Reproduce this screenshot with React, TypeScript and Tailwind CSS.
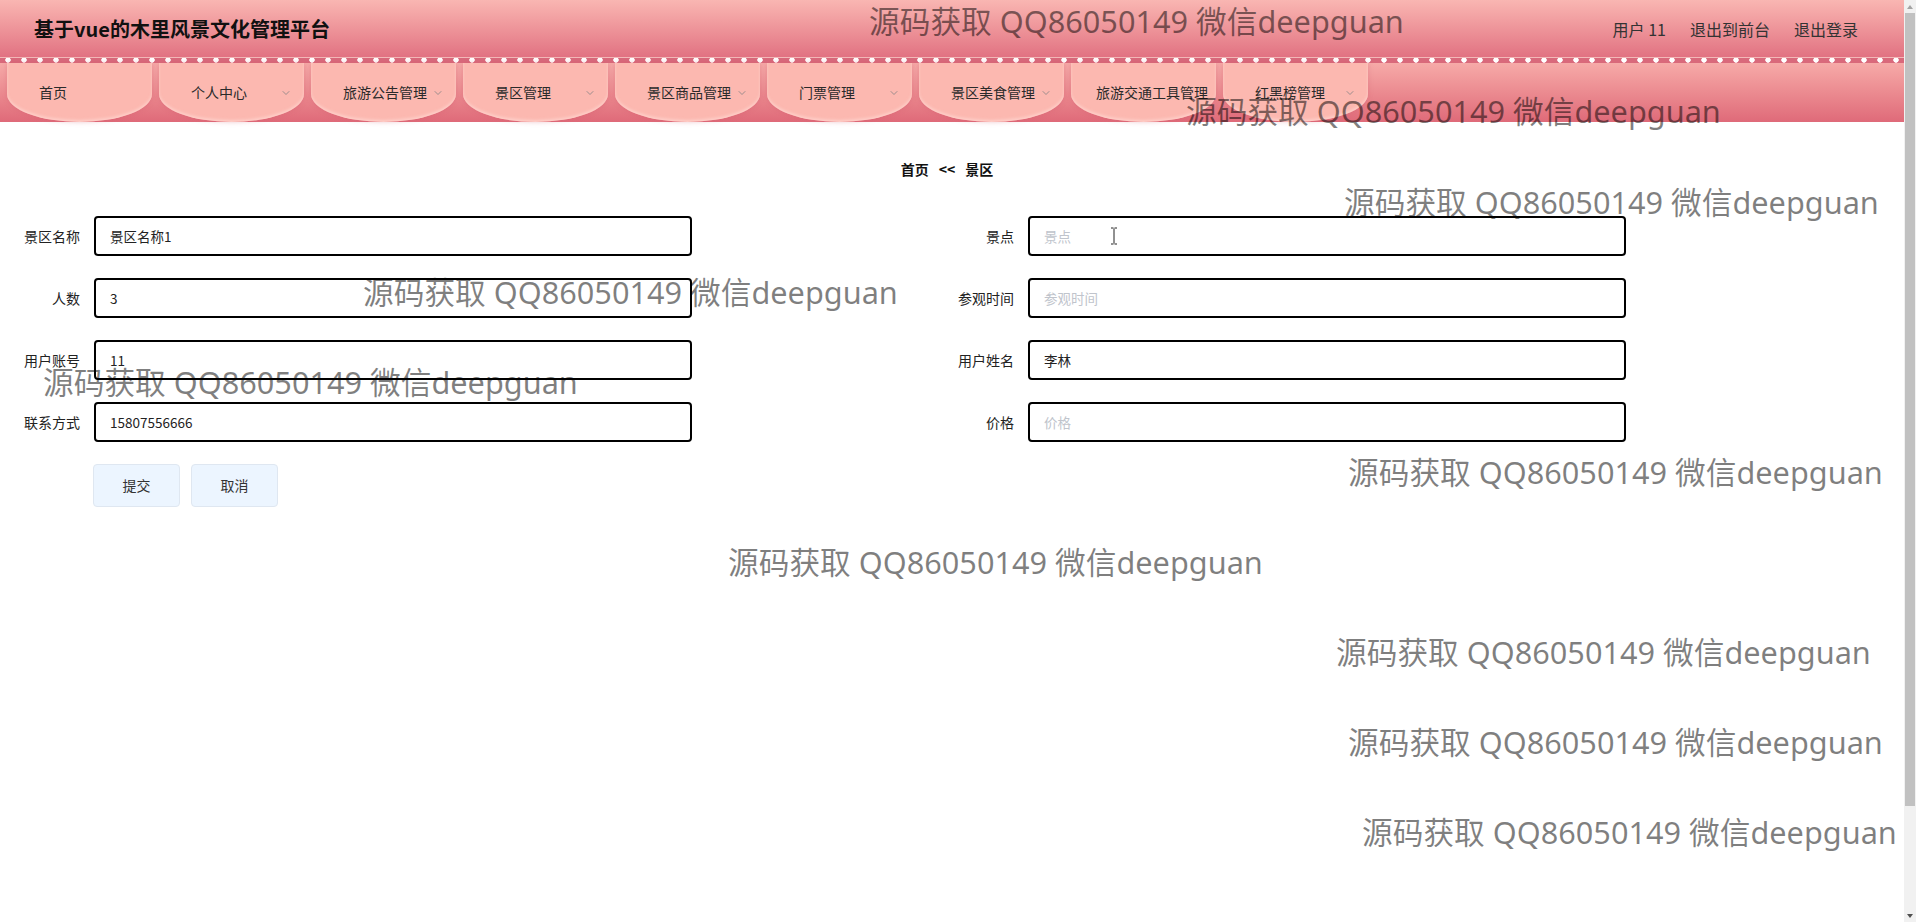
import { ChevronDown } from 'lucide-react';

const tabs = [
  { name: '首页', arrow: false },
  { name: '个人中心', arrow: true },
  { name: '旅游公告管理', arrow: true },
  { name: '景区管理', arrow: true },
  { name: '景区商品管理', arrow: true },
  { name: '门票管理', arrow: true },
  { name: '景区美食管理', arrow: true },
  { name: '旅游交通工具管理', arrow: false },
  { name: '红黑榜管理', arrow: true },
];

const fields = [
  { label: '景区名称', value: '景区名称1', placeholder: '景区名称' },
  { label: '景点', value: '', placeholder: '景点' },
  { label: '人数', value: '3', placeholder: '人数' },
  { label: '参观时间', value: '', placeholder: '参观时间' },
  { label: '用户账号', value: '11', placeholder: '用户账号' },
  { label: '用户姓名', value: '李林', placeholder: '用户姓名' },
  { label: '联系方式', value: '15807556666', placeholder: '联系方式' },
  { label: '价格', value: '', placeholder: '价格' },
];

// watermark overlay positions (left, top)
const marks = [
  [869, 1],
  [1186, 91],
  [1344, 182],
  [363, 272],
  [43, 362],
  [1348, 452],
  [728, 542],
  [1336, 632],
  [1348, 722],
  [1362, 812],
];

export default function App() {
  return (
    <div className="flex bg-white font-['Noto_Sans_CJK_SC',sans-serif] text-[#333]">
      <div className="relative flex-1 min-w-0 min-h-[1043px]">
        <header>
          {/* Top bar */}
          <div className="h-[57px] flex items-center justify-between pl-[34px] pr-[46px] bg-gradient-to-b from-[#f9b6b2] to-[#e17282]">
            <h1 className="text-[20px] font-bold text-[#111]">基于vue的木里风景文化管理平台</h1>
            <div className="flex items-center gap-[24px] text-[16px] text-[#333]">
              <span>用户 11</span>
              <span>退出到前台</span>
              <span>退出登录</span>
            </div>
          </div>

          {/* Dotted border */}
          <div className="h-[6px] bg-[#d9697b] border-t border-[#f3b8b8] bg-[radial-gradient(circle_at_8px_2px,#ffffff_2.4px,transparent_3px)] bg-[length:16px_6px]" />

          {/* Nav */}
          <nav className="h-[59px] flex gap-[7px] pl-[7px] bg-gradient-to-b from-[#f6aaa8] to-[#df6a79]">
            {tabs.map((t, i) => (
              <div
                key={t.name}
                className={`relative w-[145px] h-full flex items-center ${i === 7 ? 'pl-[25px]' : 'pl-[32px]'} bg-[#fcb8b0] rounded-b-[50%_28px] shadow-[inset_0_-2px_3px_rgba(255,215,210,0.7),0_0_5px_rgba(205,90,105,0.35)] text-[14px] text-[#2a2a2a] whitespace-nowrap`}
              >
                <span>{t.name}</span>
                {t.arrow && (
                  <ChevronDown className="absolute right-[12px] top-1/2 -translate-y-1/2 w-[12px] h-[12px] text-[#7d7d80]" strokeWidth={1.5} />
                )}
              </div>
            ))}
          </nav>
        </header>

        <main className="px-[18px]">
          <div className="mt-[37px] flex justify-center items-center gap-[10px] text-[14px] font-bold text-[#111] leading-[20px] pr-[10px]">
            <span>首页</span>
            <span>&lt;&lt;</span>
            <span>景区</span>
          </div>

          <form className="mt-[37px] grid grid-cols-2 gap-y-[22px]">
            {fields.map((f) => (
              <div key={f.label} className="flex items-center">
                <label className="w-[62px] text-right text-[14px] text-[#222] whitespace-nowrap">{f.label}</label>
                <div className="relative ml-[14px] w-[598px] h-[40px] border-2 border-black rounded-[4px] flex items-center px-[14px] text-[13.5px]">
                  {f.value ? (
                    <span className="text-[#222]">{f.value}</span>
                  ) : (
                    <span className="text-[#c0c4cc]">{f.placeholder}</span>
                  )}
                  {f.label === '景点' && (
                    <svg className="absolute left-[80px] top-[9px]" width="8" height="18" viewBox="0 0 8 18" fill="none" stroke="#222" strokeWidth="1">
                      <path d="M1 1h2.5M4.5 1H7M4 1.5v15M1 17h2.5M4.5 17H7" />
                    </svg>
                  )}
                </div>
              </div>
            ))}
          </form>

          <div className="mt-[22px] ml-[75px] flex gap-[11px]">
            <button className="w-[87px] h-[43px] rounded-[4px] bg-[#ecf5ff] border border-[#dfe7f1] text-[14px] text-[#333]">提交</button>
            <button className="w-[87px] h-[43px] rounded-[4px] bg-[#ecf5ff] border border-[#dfe7f1] text-[14px] text-[#333]">取消</button>
          </div>
        </main>

        {/* Watermarks */}
        {marks.map(([x, y], i) => (
          <div
            key={i}
            className="absolute pointer-events-none whitespace-nowrap text-[30.7px] leading-[40px] text-black/50 font-['Noto_Sans','Noto_Sans_CJK_SC',sans-serif]"
            style={{ left: x, top: y }}
          >
            源码获取 QQ86050149 微信deepguan
          </div>
        ))}
      </div>

      {/* Browser scrollbar */}
      <aside className="w-[12px] h-[922px] shrink-0 bg-[#f1f1f1] flex flex-col">
        <div className="h-[13px] flex items-center justify-center">
          <div className="w-0 h-0 border-x-[3px] border-x-transparent border-b-[4px] border-b-[#a3a3a3]" />
        </div>
        <div className="h-[793px] mx-[1px] bg-[#c1c1c1]" />
        <div className="flex-1" />
        <div className="h-[13px] flex items-center justify-center">
          <div className="w-0 h-0 border-x-[3px] border-x-transparent border-t-[4px] border-t-[#505050]" />
        </div>
      </aside>
    </div>
  );
}
